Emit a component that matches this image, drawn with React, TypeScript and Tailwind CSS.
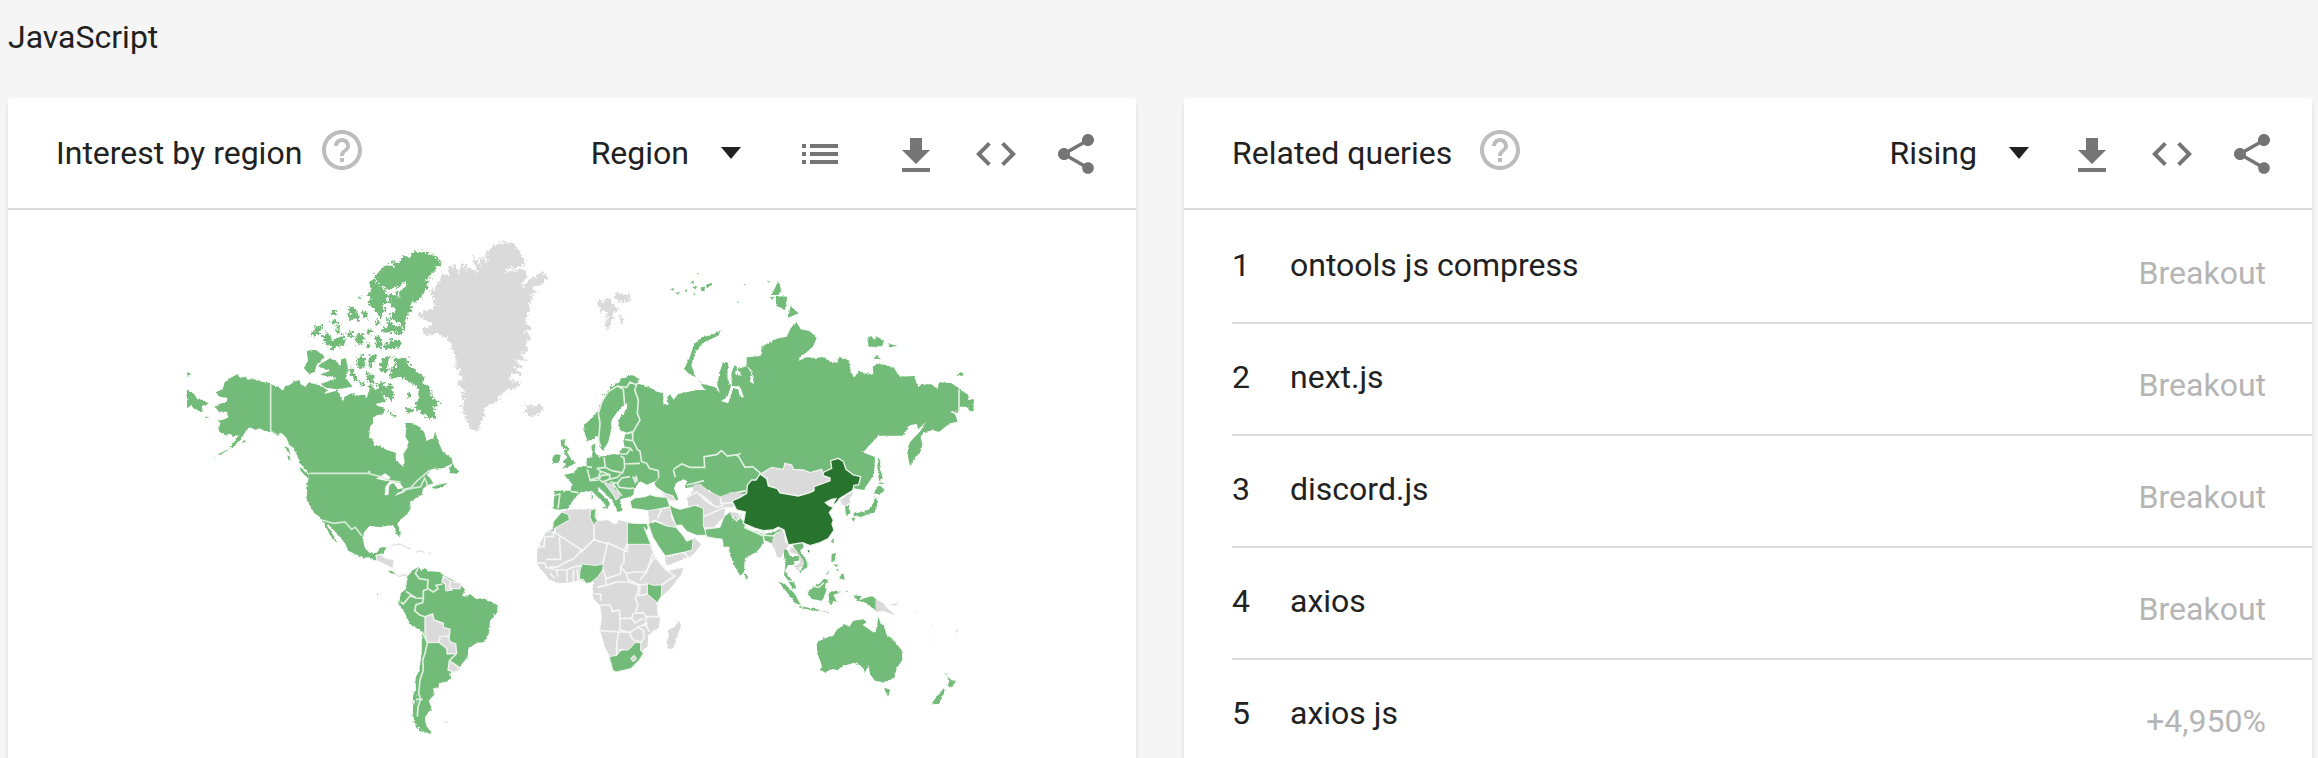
import type { ReactNode } from "react";

const GREEN = "#72bb78";
const DARK = "#28732d";
const GREY = "#dadada";

const PATHS = {
  help: "M11 18h2v-2h-2v2zm1-16C6.48 2 2 6.48 2 12s4.48 10 10 10 10-4.48 10-10S17.52 2 12 2zm0 18c-4.41 0-8-3.59-8-8s3.59-8 8-8 8 3.59 8 8-3.59 8-8 8zm0-14c-2.21 0-4 1.79-4 4h2c0-1.1.9-2 2-2s2 .9 2 2c0 2-3 1.75-3 5h2c0-2.25 3-2.5 3-5 0-2.21-1.79-4-4-4z",
  list: "M3 13h2v-2H3v2zm0 4h2v-2H3v2zm0-8h2V7H3v2zm4 4h14v-2H7v2zm0 4h14v-2H7v2zM7 7v2h14V7H7z",
  download: "M19 10h-4V4H9v6H5l7 7 7-7zM5 19v2h14v-2H5z",
  code: "M9.4 16.6L4.8 12l4.6-4.6L8 6l-6 6 6 6 1.4-1.4zm5.2 0l4.6-4.6-4.6-4.6L16 6l6 6-6 6-1.4-1.4z",
  share:
    "M18 16.08c-.76 0-1.44.3-1.96.77L8.91 12.7c.05-.23.09-.46.09-.7s-.04-.47-.09-.7l7.05-4.11c.54.5 1.25.81 2.04.81 1.66 0 3-1.34 3-3s-1.34-3-3-3-3 1.34-3 3c0 .24.04.47.09.7L8.04 9.81C7.5 9.31 6.79 9 6 9c-1.66 0-3 1.34-3 3s1.34 3 3 3c.79 0 1.5-.31 2.04-.81l7.12 4.16c-.05.21-.08.43-.08.65 0 1.61 1.31 2.92 2.92 2.92 1.61 0 2.92-1.31 2.92-2.92s-1.31-2.92-2.92-2.92z",
};

function Icon({ d }: { d: string }) {
  return (
    <svg viewBox="0 0 24 24" className="size-12 fill-current" aria-hidden="true">
      <path d={d} />
    </svg>
  );
}

function IconButton({ label, d }: { label: string; d: string }) {
  return (
    <button type="button" aria-label={label} className="pt-0.5 text-[#757575]">
      <Icon d={d} />
    </button>
  );
}

function Picker({ label, options }: { label: string; options: string[] }) {
  return (
    <label className="relative flex items-center">
      <select
        aria-label={label}
        className="field-sizing-content appearance-none bg-transparent pr-13 leading-10 outline-none"
      >
        {options.map((o) => (
          <option key={o}>{o}</option>
        ))}
      </select>
      <svg viewBox="0 0 20 12" className="pointer-events-none absolute right-0 h-3 w-5 fill-current" aria-hidden="true">
        <path d="M0 0h20L10 12z" />
      </svg>
    </label>
  );
}

function Card({ title, titleGap, controls, children }: { title: string; titleGap: string; controls: ReactNode; children: ReactNode }) {
  return (
    <section className="min-w-0 flex-1 rounded-t bg-white shadow-[0_4px_4px_rgba(0,0,0,0.12)]">
      <header className="flex h-28 items-center justify-between border-b-2 border-[#dadada] pr-9 pl-12">
        <div className={`flex items-center ${titleGap}`}>
          <h2>{title}</h2>
          <button type="button" aria-label={`About ${title}`} className="mb-1.5 text-[#bdbdbd]">
            <Icon d={PATHS.help} />
          </button>
        </div>
        <div className="flex items-center">{controls}</div>
      </header>
      {children}
    </section>
  );
}

function Actions() {
  return (
    <div className="flex items-center gap-8">
      <IconButton label="Download" d={PATHS.download} />
      <IconButton label="Embed" d={PATHS.code} />
      <IconButton label="Share" d={PATHS.share} />
    </div>
  );
}

function WorldMap() {
  return (
    <svg viewBox="8 210 1128 548" className="block w-full" role="img" aria-label="World map of interest by region">
      <defs>
        <filter id="fjord" x="-5%" y="-5%" width="110%" height="110%">
          <feTurbulence type="fractalNoise" baseFrequency="0.13" numOctaves="2" seed="4" />
          <feDisplacementMap in="SourceGraphic" scale="24" xChannelSelector="R" yChannelSelector="G" />
        </filter>
        <filter id="coast" x="-5%" y="-5%" width="110%" height="110%">
          <feTurbulence type="fractalNoise" baseFrequency="0.14" numOctaves="2" seed="9" />
          <feDisplacementMap in="SourceGraphic" scale="8" xChannelSelector="R" yChannelSelector="G" />
        </filter>
      </defs>

      {/* North America */}
      <g transform="translate(170 230) scale(.33333)" fill={GREEN}>
        <g filter="url(#coast)">
          <path d="M137 487L158 478 165 455 185 442 203 432 210 443 228 440 232 449 250 447 275 455 292 458 303 463 325 472 340 482 345 468 358 466 372 455 388 450 392 463 408 470 415 458 435 462 460 472 472 480 462 492 500 482 512 495 518 516 525 500 545 490 560 496 585 494 590 505 598 478 592 470 605 462 615 480 628 474 640 500 648 515 615 522 645 538 640 552 620 556 608 565 610 578 600 590 597 622 608 628 612 648 630 648 650 660 678 668 676 690 688 700 700 712 704 695 700 672 712 655 716 635 706 620 708 605 706 578 728 580 750 592 762 606 770 632 790 624 796 606 805 635 818 665 845 685 848 700 822 714 785 717 772 732 780 744 790 760 776 764 760 775 755 795 735 805 720 815 722 835 712 852 690 870 682 882 692 905 690 922 678 910 675 890 660 886 630 892 600 887 582 905 578 930 585 955 600 970 622 968 630 952 650 952 640 968 622 975 615 992 600 982 580 984 535 962 525 940 500 910 474 882 470 886 482 902 502 938 492 930 480 915 460 875 450 862 432 848 422 830 410 810 412 760 418 738 412 722 400 712 390 700 383 680 372 655 358 645 350 625 338 612 320 614 302 604 285 603 268 595 255 601 240 592 225 605 215 625 190 650 178 656 198 628 208 615 190 618 180 612 165 615 148 605 145 592 152 580 143 572 165 568 175 560 172 545 150 545 133 530 155 520 170 515 172 505 150 500Z" />
          <path d="M51 478L72 492 82 508 100 510 115 522 95 528 98 545 84 542 72 535 65 525 51 535ZM51 426L64 432 52 438ZM102 558l18 6-12 0zM145 672l30-14-4 4-24 14zM130 684l4-3v3zM215 640l8-12 6 6zM346 650l8 0 8 24-8-8zM352 676l8 4 2 14-8-10zM388 710l22 20 12 10-10 4-20-22z" />
          <path d="M785 772l22-8 26-6-16 14-24 6zM840 714l8-14 6 12 14 12-10 8-20-4z" />
        </g>
        <g filter="url(#fjord)">
          <path d="M614 134L650 104 676 110 664 92 692 98 698 74 722 84 726 66 745 65 770 66 790 74 800 85 816 98 790 125 760 155 782 146 765 185 750 208 728 215 722 245 708 262 700 290 686 276 660 268 664 248 682 240 664 228 652 190 670 196 690 200 678 186 712 170 706 155 690 168 650 180 622 160z" />
          <path d="M596 156L612 146 625 165 645 180 654 212 636 232 650 240 628 262 610 235 592 215 606 204 590 196 604 185z" />
          <path d="M635 298L655 288 650 262 670 285 706 292 698 312 668 306 640 310zM640 350L660 330 690 330 694 352 670 356 645 360zM614 314L630 318 638 355 618 354zM590 298l14 4-2 12-12-2zM590 336l14 6-4 12-12-4zM556 322l10-14 14 6 0 32-18-4zM574 240l16 6 6 24-14-6zM532 225l14 4 22 24-2 20-22-12zM530 250l14 4 6 18-14-4zM480 250l18-8 4 12-14 4zM480 274l18-8 2 14-16 2zM420 320l20-34 20 2-18 26zM456 328l14-22 10 10 8 18 24-20 14 8 0 22-28 8-16 10 2-16-18-4zM500 272l8 10 2 32-10-6zM532 310l16-6 2 18-14 0zM568 195l4 12-4 0zM614 276l14-4 4 10-14 4z" />
          <path d="M562 384l14-10 10 14-2 24-18 6-6-16zM544 408l12 30 14 18-18-6-14-30zM568 462l16-8-4 16zM590 426l20 8 2 24-14 2-10-14zM596 376l26-2-4 14-12 8 0 22-10-6z" />
          <path d="M636 384l22-6-4 24-4 28-18-2-2-22z" />
          <path d="M668 380L686 388 714 382 714 400 735 420 764 444 758 462 782 470 786 505 810 516 792 530 796 566 778 566 750 546 734 532 738 515 748 502 742 470 718 455 690 440 660 446 662 420 678 404z" />
          <path d="M618 458l24-2 4 18 16-16 10 30-6 26-16-12-20-16zM712 488l12 0-4 10-10 4zM650 544l24 8 4 8-18-4zM708 534l26 2 0 10-26 2z" />
        </g>
        <g filter="url(#coast)">
          <path d="M410 362L438 360 464 380 440 404 434 425 418 432 402 415 414 392z" />
          <path d="M442 408L480 385 500 392 510 410 514 388 528 384 534 420 528 445 548 470 500 478 470 474 452 462 485 450 505 445 450 434 480 422z" />
        </g>
        <path
          fill="#fff"
          d="M618 746L645 730 662 742 652 754zM660 752L678 754 658 766 655 795 644 796 646 770zM668 756L690 758 700 774 684 778zM674 798L684 788 708 780 704 786zM696 778l22-6 2 4-18 6z"
        />
        <path
          fill="none"
          stroke="#d5ebd6"
          strokeWidth="5"
          d="M302 463V604L316 612M418 730H597V722L600 732 625 738 660 752 692 756M696 782L720 776 742 752 780 720M720 776L752 770 764 744 774 768M455 870L490 880 525 876 544 898 556 892 576 918"
        />
        <path fill={GREY} stroke="#f5f5f5" strokeWidth="3" d="M618 975L634 975 646 985 672 990 668 1015 654 1008 636 998 620 992zM690 1032l22 2 2 4-22 0z" />
        <path fill="none" stroke="#e2e2e2" strokeWidth="4" d="M672 1028L688 1040 704 1034 712 1040M665 946L690 942 724 958M738 966L752 962 764 968M776 970h8" />
        <path d="M654 1022l14 2 6 8-12-2zM621 1092h3v3h-3z" />
      </g>

      {/* Greenland and the North Atlantic */}
      <g transform="translate(400 230) scale(.33333)" fill={GREY}>
        <g filter="url(#fjord)">
          <path d="M52 258L65 245 85 240 102 230 102 205 88 188 105 170 120 150 130 125 150 145 142 118 165 102 176 135 186 98 202 132 194 98 212 115 235 132 222 102 218 75 244 108 240 75 262 100 258 70 272 55 290 42 310 36 345 42 355 60 372 85 380 95 365 108 330 115 308 132 340 122 378 118 380 140 365 172 392 145 410 140 420 125 438 132 444 145 420 165 388 172 415 185 390 192 402 206 386 215 392 235 380 260 378 282 398 295 375 305 395 325 375 340 388 360 360 375 382 392 345 390 370 415 340 415 376 438 335 430 330 450 365 458 350 475 320 480 300 495 295 515 265 525 245 545 258 555 242 575 240 595 230 602 205 590 198 565 182 528 198 515 180 495 195 485 170 455 192 450 172 425 192 420 168 415 165 375 155 350 140 325 110 310 78 318 65 295 92 290 95 278z" />
          <path d="M370 522L385 535 372 545 395 560 415 552 430 538 425 522 400 528z" />
          <path d="M590 208L608 215 622 205 632 205 640 225 656 240 640 250 635 275 625 302 612 282 632 262 610 262 625 250 600 240zM640 198L650 186 670 195 690 192 688 212 668 220zM655 255L674 270 665 284z" />
        </g>
      </g>

      {/* Russia, Scandinavia and Europe */}
      <g transform="translate(530 250) scale(.33333)" fill={GREEN}>
        <g filter="url(#coast)">
          <path d="M318 400L340 405 370 418 392 435 390 452 375 460 338 446 350 468 366 492 390 485 402 460 416 468 412 440 420 432 430 450 445 432 475 425 500 420 525 420 512 402 530 404 555 412 570 430 562 405 568 370 578 340 595 340 592 380 602 412 592 442 572 453 594 460 610 415 625 418 630 442 642 442 630 410 606 408 604 370 614 345 622 352 614 370 636 378 622 358 650 348 664 368 660 395 672 402 664 360 650 348 650 322 692 318 695 290 735 268 770 260 782 235 800 217 812 238 840 243 860 265 848 290 828 308 808 322 808 332 830 322 855 325 880 320 900 335 922 338 928 320 958 332 960 360 973 385 985 362 1000 370 1030 372 1028 350 1045 340 1090 352 1110 380 1152 378 1165 412 1175 402 1210 405 1222 418 1228 397 1265 400 1290 418 1315 435 1318 450 1332 448 1330 487 1308 470 1290 470 1285 485 1260 485 1275 492 1283 515 1260 520 1225 547 1210 540 1182 547 1172 560 1177 585 1170 610 1155 622 1140 648 1132 610 1137 580 1155 560 1170 545 1188 515 1165 538 1160 522 1140 525 1118 557 1045 557 998 608 1035 620 1032 675 1000 720 973 715 900 740 700 700 650 725 640 740 605 738 570 744 550 730 510 705 490 710 465 715 470 694 446 694 436 715 445 750 430 752 410 732 380 712 372 700 385 690 350 704 340 698 328 696 312 718 310 735 295 742 270 748 278 782 262 786 255 765 240 745 220 725 205 710 205 722 238 755 240 762 232 775 220 757 200 738 185 722 172 725 150 727 130 750 115 775 90 779 70 776 74 722 122 722 125 700 102 675 130 668 145 652 170 648 170 628 188 620 184 588 196 580 194 606 205 620 225 618 250 612 268 614 272 600 285 592 280 575 284 556 310 550z" />
          <path d="M163 525L190 500 205 485 215 455 235 420 265 400 285 385 305 376 326 386 322 410 400 430 400 520 325 542 290 548 270 540 264 512 280 492 292 468 280 465 262 485 245 510 242 545 235 575 220 602 210 592 203 558 185 570 172 572 163 545z" />
          <path d="M572 240L565 257 525 275 500 300 484 345 496 380 480 374 462 358 480 320 492 282 515 262 545 255zM503 388l14 12-4 0z" />
          <path d="M745 92L755 120 745 135 725 135zM738 138L772 140 765 180 738 165zM720 140l12 2-6 8zM782 168L806 190 774 204zM712 94h8l-4 4zM1012 265L1024 258 1034 272 1040 258 1062 272 1056 288 1038 290 1016 290zM1074 280L1100 288 1080 292zM1042 315L1052 328 1030 326zM1282 375L1292 366 1302 373 1295 378z" />
          <path d="M420 118l12-4-2 8zM436 128l14-2-6 8zM464 122l8-4-2 8zM482 100l8-10 2 10zM488 112l10-4 4 4-12 6zM512 112l12-2 0 14-10 0zM528 106l16-8 2 6-14 10zM500 70l8-1-6 4zM490 128l10 6-8 2zM640 102h6v3h-6zM622 155h5v3h-5z" />
          <path d="M92 570L106 567 103 585 118 595 112 608 122 625 136 640 115 650 95 656 108 644 98 636 112 620 100 610 108 597 94 590zM68 622L78 612 92 615 88 637 66 642z" />
          <path d="M185 722l4 20-4 12zM215 768l16 4-8 6z" />
        </g>
        <path fill={GREEN} filter="url(#fjord)" d="M163 525L190 500 205 485 215 455 235 420 265 396 285 382 305 376 324 384 300 398 262 412 235 430 216 462 208 492 206 540 190 565 172 570z" />
        <path fill="#fff" d="M432 715L438 700 460 688 472 694 462 710 472 740 480 775 470 778 450 770 444 745zM292 458L280 470 290 480z" />
        <g fill="none" stroke="#e0f0e1" strokeWidth="5">
          <path d="M322 398L314 420 325 450 322 490 330 510 308 548 308 570 322 598 330 604 335 635 350 640 358 655 385 662 386 685M262 408L280 418 284 465M205 490L210 520 206 570 212 592M205 490L216 455 235 425 262 408 290 412 300 396 318 404M310 545L284 552M284 568L306 572M284 592L300 594 308 604M270 612L290 612 300 598M272 618L282 624 284 652 276 672M284 642L330 640M222 622L226 652 245 662 275 668M200 655L226 652M170 650L186 652M172 658L180 690 205 682 212 664 200 655M212 664L240 674 215 676 205 690 178 692M240 674L238 688 218 696 210 690M238 688L262 682 272 672M240 696L262 700 275 684 300 680M262 700L268 712 300 716 312 714M248 700L262 720 276 738M318 676L322 694M122 724L145 728M90 730L84 775M75 735L90 732M430 660L436 682M430 658L455 642 480 652 524 652 522 620 560 614 575 602 592 618 622 614 645 652 668 650 692 670M618 618l14-8M470 705L500 698 522 692M490 708L510 704 528 720 550 732 570 742 608 730 648 722" />
          <path d="M1287 418V484" />
        </g>
        <path fill={GREY} stroke="#f2f2f2" strokeWidth="3" d="M308 680L320 686 316 700zM222 698L250 704 252 720 266 728 268 742 258 750 248 732zM395 728L430 738 436 756 405 746z" />
      </g>

      {/* South America */}
      <g transform="translate(290 440) scale(.33333)" fill={GREEN}>
        <path d="M368 390L385 382 395 392 404 384 412 394 445 395 465 408 510 432 525 450 516 468 530 470 540 462 560 478 575 474 600 482 622 496 622 515 600 542 597 580 582 607 560 608 535 626 532 655 518 668 505 690 480 695 478 705 482 714 472 724 447 730 445 745 430 745 432 765 416 782 425 805 405 832 408 855 425 882 404 876 376 850 372 820 380 780 376 715 388 690 395 640 396 575 360 552 345 520 327 495 332 460 348 448 352 410z" filter="url(#coast)" />
        <path d="M374 750l8 0-2 60 4 40 20 26-10-2-20-26-6-30z" filter="url(#fjord)" />
        <g fill={GREY} stroke="#f3f3f3" strokeWidth="4">
          <path d="M405 530L428 522 432 540 460 550 460 562 480 568 478 590 450 590 445 607 412 608 405 580z" />
          <path d="M450 590L475 588 480 605 497 612 500 640 472 642 470 625 448 608z" />
          <path d="M478 662L508 682 495 697 474 690z" />
          <path d="M460 408L482 422 478 440 485 450 468 452 466 432 456 425z" />
          <path d="M482 424L515 430 510 446 485 446 478 438z" />
        </g>
        <path
          fill="none"
          stroke="#e0f0e1"
          strokeWidth="5"
          d="M384 385L376 400 388 416 414 420 412 445 430 456 444 446 438 436 458 432M412 448L400 452 400 475 378 474 348 454M378 474L360 468 340 492 332 486M400 475L398 488 378 494 374 512 388 524 404 530M396 574L412 608 405 640 398 660 400 690 390 720 386 760 392 778 384 800 382 830M378 778H398M500 640L480 660"
        />
        <path fill={GREY} d="M460 846l8-3-2 7zM470 844l6 2-6 3z" />
      </g>

      {/* Africa and the Middle East */}
      <g transform="translate(520 470) scale(.33333)">
        <g fill={GREY} filter="url(#coast)">
          <path d="M125 125L155 118 195 118 228 115 230 140 225 155 265 150 290 165 295 150 320 156 355 160 380 160 375 180 390 220 400 250 430 290 440 302 490 294 485 312 460 345 425 380 412 395 412 430 420 445 418 470 385 495 382 530 368 540 368 555 335 595 285 605 275 590 268 560 255 530 240 482 246 440 240 408 220 385 218 350 220 335 200 340 180 330 145 338 115 340 90 330 65 300 50 280 52 240 75 190 95 180 100 155z" />
          <path d="M475 450L483 466 460 535 446 537 439 515 447 500 444 480 465 470z" />
          <path d="M435 262L495 248 515 240 520 202 543 222 522 252 500 264 440 287zM385 125L395 118 450 115 455 145 470 172 440 168 410 150 400 152 388 176zM500 80L520 65 518 45 540 42 560 62 600 80 640 65 682 74 668 92 640 100 640 112 615 112 612 140 580 172 550 172 550 115 530 105 506 112z" />
        </g>
        <g fill={GREEN} stroke="#f0f6f0" strokeWidth="3">
          <path d="M76 185L98 178 100 155 125 126 146 134 148 150 105 174 102 184z" />
          <path d="M212 120L228 116 225 140 232 152 221 164 210 142z" />
          <path d="M322 158L355 161 380 160 385 174 380 182 372 172 392 223 322 223z" />
          <path d="M180 302L186 282 225 286 250 283 248 300 232 322 212 338 198 340 190 328 178 328z" />
          <path d="M382 340L400 346 425 345 424 378 412 398 382 372z" />
          <path d="M268 560L290 556 304 540 325 540 346 518 362 518 362 542 370 550 358 570 332 596 288 606 278 600z" />
          <path d="M330 94L345 84 375 80 390 74 410 80 440 82 450 110 420 116 385 122 360 118 336 116z" />
          <path d="M448 104L462 112 480 118 505 112 525 106 550 115 550 168 562 196 530 196 500 184 485 165 468 166 455 132z" />
          <path d="M554 178L600 172 612 140 632 124 640 150 620 184 618 208 590 206 560 200z" />
          <path d="M385 162L400 152 440 168 468 172 490 198 500 214 520 206 516 240 495 246 436 258 415 228 398 200z" />
        </g>
        <path fill={GREY} stroke="#f5f5f5" strokeWidth="3" d="M332 565L342 556 350 566 340 576z" />
        <path
          fill="none"
          stroke="#f6f6f6"
          strokeWidth="5"
          d="M105 174V188L185 240 160 268 145 272 110 292 90 290M52 230H72L75 200H100V184M118 200L122 268 78 268M185 240V245L222 208 232 212 262 222M222 165L222 208M322 222V245L262 218 258 240 248 282M322 222L312 240 312 275 302 290 318 310 345 306 380 306 398 252M302 290V312L258 326M258 326L258 346 232 352M258 326L250 300M392 223L405 262 432 288M380 306L360 330M318 310L325 330 360 345 382 342M405 262L390 282 378 305M412 270L440 302M440 302L465 318 425 345M258 346L290 336 325 336 355 345 352 370 346 385 354 405M222 372H242V392M240 405H270L278 425 298 420 300 445 335 445 340 430M354 405L345 430 370 428 378 440 418 440M238 482L300 486 320 486 325 485M300 445V480L330 488 352 472 385 460M378 440L376 462 388 485M290 556V520L296 486M325 485L340 510M296 540L310 538M340 510L362 516M352 472L370 480 372 505 362 518M335 445L345 458 370 445M382 372L352 378M360 345L358 375M50 278L76 280 78 292 110 300M110 300L114 320M90 310L105 325M140 300L142 338M160 298V336M172 296L174 332M110 300L140 300 162 290 186 288M495 248L502 262M425 118L412 145M410 150L395 158M500 82L530 66 560 95 590 112 612 104M540 72L575 100M600 82L604 100 640 98M550 140L615 112"
        />
        <path fill={GREY} stroke="#f2f2f2" strokeWidth="3" d="M425 70L450 74 470 92 450 90z" />
      </g>

      {/* East Asia and Oceania */}
      <g transform="translate(720 450) scale(.33333)" fill={GREEN}>
        <g filter="url(#coast)">
          <path d="M4 250L30 220 40 200 55 196 72 218 80 235 130 250 160 248 180 236 188 244 165 262 158 282 145 275 132 270 125 288 110 305 75 325 72 365 60 377 45 350 30 315 28 290 12 290 8 270z" />
          <path d="M74 368L84 380 78 390z" />
          <path d="M375 170L386 164 392 190 378 196zM400 190L430 186 448 178 462 155 464 140 474 155 466 186 445 192 425 200 402 198zM462 130L475 106 494 120 480 134zM474 20L481 35 479 55 488 82 478 95 473 60zM394 206L404 202 402 216zM472 98h20l-6 6z" />
          <path d="M190 300L202 300 210 318 238 318 236 332 222 334 220 345 204 345 196 362 206 382 222 394 228 418 214 412 205 392 192 375 196 345z" />
          <path d="M218 285L245 278 252 290 240 302 262 335 262 352 236 370 250 348 250 332 228 302z" />
          <path d="M175 395L195 402 225 432 242 466 226 460 205 432zM236 468L270 474 300 480 296 484 240 474zM305 483l22 4-4 3zM262 425L285 408 300 400 312 386 325 392 316 402 318 425 306 452 275 447zM326 432L335 424 362 425 340 434 350 456 340 452 336 464 328 460zM335 312L346 310 344 335 334 336zM340 342l14 2-4 8zM355 384L370 370 374 388 362 386zM318 375l10-16-4 14zM348 358l6-2 2 10zM335 270L342 265 338 284zM378 424l6-4 0 10z" />
          <path d="M402 436L425 438 418 450 435 444 455 438 467 446 467 482 452 470 432 456 410 452z" />
          <path d="M290 580L310 565 340 558 350 540 375 522 388 530 400 512 430 508 440 516 428 525 462 548 470 535 475 500 482 520 492 528 500 555 520 570 545 600 547 630 530 655 522 685 490 697 465 692 450 672 446 645 435 667 425 648 402 638 370 648 355 658 330 660 315 667 300 660 305 645 292 610z" />
          <path d="M492 715L512 718 504 740zM684 680L694 690 708 693 696 712 682 708 688 695zM670 662l14 16-4-2zM672 714L674 724 656 762 633 763 650 740z" />
        </g>
        <g stroke="#eef3ee" strokeWidth="4">
          <path fill={GREY} d="M122 72L155 52 190 58 195 40 215 45 220 58 250 60 270 68 305 58 310 75 332 85 332 95 285 112 275 128 235 138 180 130 175 118 145 108 140 85z" />
          <path fill={DARK} d="M36 153L60 142 80 130 82 105 95 90 108 90 120 72 140 86 145 108 172 116 180 129 235 138 270 128 282 122 282 110 330 92 330 84 308 76 312 66 335 55 332 32 355 25 370 34 378 58 400 75 422 80 416 104 402 106 398 122 360 145 348 160 340 168 342 156 348 146 335 148 316 158 328 168 340 172 328 188 340 210 336 222 342 240 325 266 300 278 270 287 248 278 205 285 198 262 192 240 175 232 158 240 130 242 105 235 70 220 76 186 50 180z" />
        </g>
        <g fill={GREY} filter="url(#coast)">
          <path d="M360 152L380 136 402 126 388 148 392 158 372 168zM158 264L180 240 192 250 196 272 206 288 190 304 184 325 170 320 165 295 154 284zM208 290L226 298 248 326 252 342 235 362 220 348 240 338 234 314 212 308zM468 446L490 460 504 478 528 497 490 482 468 486zM510 464L530 460 540 452 528 468zM28 186l20 2 18 12-8 10-22-10z" />
          <path d="M548 468l8 4M582 482l14 6-4 0zM632 526h4v3h-4zM704 544l14-8-8 10zM620 566l8 6-4-1z" />
        </g>
        <path fill="none" stroke="#e0f0e1" strokeWidth="5" d="M72 232L110 246 132 250M76 226L76 234 130 258M130 242L136 256 160 258 176 246M130 252L132 276M36 200L50 212 66 190M275 408L296 412 312 398M205 392L226 396" />
        <path fill={DARK} d="M263 300l6 2-4 6z" />
      </g>
    </svg>
  );
}

const queries = [
  ["ontools js compress", "Breakout"],
  ["next.js", "Breakout"],
  ["discord.js", "Breakout"],
  ["axios", "Breakout"],
  ["axios js", "+4,950%"],
];

export default function App() {
  return (
    <main className="flex h-screen flex-col overflow-hidden bg-[#f5f5f5] pr-1.5 pl-2 font-['Roboto',sans-serif] text-[32px] leading-10 text-[#212121]">
      <h1 className="pt-[17px] pb-[41px]">JavaScript</h1>
      <div className="flex flex-1 gap-12">
        <Card
          title="Interest by region"
          titleGap="gap-4"
          controls={
            <>
              <Picker label="Resolution" options={["Region", "City"]} />
              <div className="flex items-center gap-12 pl-[55px]">
                <IconButton label="Show as list" d={PATHS.list} />
                <Actions />
              </div>
            </>
          }
        >
          <WorldMap />
        </Card>
        <Card
          title="Related queries"
          titleGap="gap-6"
          controls={
            <>
              <Picker label="Sort queries" options={["Rising", "Top"]} />
              <div className="pl-[39px]">
                <Actions />
              </div>
            </>
          }
        >
          <ol className="pt-0.5 pl-12">
            {queries.map(([name, value], i) => (
              <li key={name} className="flex h-28 items-start border-b-2 border-[#dadada] pr-[46px]">
                <span className="w-[58px] pt-[33px]">{i + 1}</span>
                <a href="#" className="flex flex-1 justify-between">
                  <span className="pt-[33px]">{name}</span>
                  <span className="pt-[41px] text-[#b5b5b5]">{value}</span>
                </a>
              </li>
            ))}
          </ol>
        </Card>
      </div>
    </main>
  );
}
